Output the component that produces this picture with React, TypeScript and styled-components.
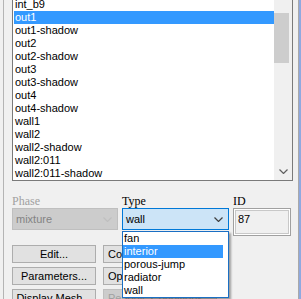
import styled, { createGlobalStyle } from 'styled-components';

const GlobalStyle = createGlobalStyle`
  html, body {
    margin: 0;
    padding: 0;
    background: #f0f0f0;
  }
  body {
    font-family: "Liberation Sans", Arial, sans-serif;
    font-size: 11px;
    color: #000;
  }
`;

const Window = styled.div`
  width: 301px;
  height: 299px;
  overflow: hidden;
  display: flex;
  background: #f0f0f0;
`;

const Group = styled.div`
  position: relative;
  margin-left: 3px;
  width: 296px;
  box-sizing: border-box;
  border-left: 1px solid #b4b4b4;
  border-right: 1px solid #a9a9a9;
  padding-left: 8px;
`;

const FrameEdge = styled.div`
  width: 2px;
  background: #8fa9e0;
`;

const ListBox = styled.div`
  margin-top: -3px;
  width: 281px;
  box-sizing: border-box;
  border: 1px solid #7a7a7a;
  background: #fff;
  display: flex;
`;

const Rows = styled.div`
  width: 261px;
  padding-left: 1px;
  box-sizing: border-box;
`;

const Row = styled.div<{ $selected?: boolean }>`
  height: 13px;
  line-height: 13px;
  padding-left: 1px;
  white-space: nowrap;
  background: ${(p) => (p.$selected ? '#3399ff' : 'transparent')};
  color: ${(p) => (p.$selected ? '#fff' : '#000')};
`;

const ScrollTrack = styled.div`
  width: 18px;
  background: #f0f0f0;
  display: flex;
  flex-direction: column;
  padding-top: 15px;
  box-sizing: border-box;
`;

const Thumb = styled.div`
  width: 15px;
  height: 50px;
  background: #cdcdcd;
`;

const ScrollSpacer = styled.div`
  flex: 1;
`;

const ScrollArrow = styled.div`
  height: 17px;
  display: flex;
  align-items: center;
  justify-content: center;
`;

const Form = styled.div`
  margin-top: 13px;
  display: grid;
  grid-template-columns: 106px 107px 58px;
  column-gap: 4px;
  align-items: start;
`;

const Label = styled.div<{ $disabled?: boolean }>`
  font-family: "Liberation Serif", "Times New Roman", serif;
  font-size: 12px;
  height: 14px;
  line-height: 14px;
  color: ${(p) => (p.$disabled ? '#a0a0a0' : '#000')};
`;

const Combo = styled.div<{ $disabled?: boolean; $open?: boolean }>`
  height: 22px;
  box-sizing: border-box;
  display: flex;
  align-items: center;
  justify-content: space-between;
  padding: 0 5px 0 3px;
  border: 1px solid ${(p) => (p.$disabled ? '#bfbfbf' : p.$open ? '#0078d7' : '#7a7a7a')};
  background: ${(p) => (p.$disabled ? '#cccccc' : p.$open ? '#cce4f7' : '#fff')};
  color: ${(p) => (p.$disabled ? '#838383' : '#000')};
`;

const IdBox = styled.div`
  height: 28px;
  box-sizing: border-box;
  border: 1px solid #a0a0a0;
  box-shadow: inset 0 0 0 1px #ffffff, inset 0 0 0 2px #c8c8c8;
  background: #f0f0f0;
  padding: 4px 0 0 4px;
  line-height: 13px;
`;

const Buttons = styled.div`
  margin-top: 9px;
  display: flex;
  flex-direction: column;
  gap: 4px;
`;

const ButtonRow = styled.div`
  display: flex;
  gap: 7px;
`;

const Button = styled.div<{ $disabled?: boolean; $wide?: boolean }>`
  height: 18px;
  box-sizing: border-box;
  border: 1px solid #adadad;
  background: #e1e1e1;
  line-height: 16px;
  text-align: center;
  white-space: nowrap;
  flex: none;
  width: ${(p) => (p.$wide ? '84px' : 'auto')};
  padding: ${(p) => (p.$wide ? '0' : '0 4px')};
  color: ${(p) => (p.$disabled ? '#a0a0a0' : '#000')};
  border-color: ${(p) => (p.$disabled ? '#bfbfbf' : '#adadad')};
  background: ${(p) => (p.$disabled ? '#cccccc' : '#e1e1e1')};
`;

const Popup = styled.div`
  position: absolute;
  left: 118px;
  top: 231px;
  width: 107px;
  box-sizing: border-box;
  border: 1px solid #1a6fc4;
  background: #fff;
  padding: 0 5px 0 0;
  box-shadow: 2px 2px 2px rgba(0, 0, 0, 0.35);
`;

const Option = styled.div<{ $active?: boolean }>`
  height: 13px;
  line-height: 13px;
  padding-left: 1px;
  background: ${(p) => (p.$active ? '#3399ff' : 'transparent')};
  color: ${(p) => (p.$active ? '#fff' : '#000')};
`;

const zones = [
  'int_b9',
  'out1',
  'out1-shadow',
  'out2',
  'out2-shadow',
  'out3',
  'out3-shadow',
  'out4',
  'out4-shadow',
  'wall1',
  'wall2',
  'wall2-shadow',
  'wall2:011',
  'wall2:011-shadow',
];

const types = ['fan', 'interior', 'porous-jump', 'radiator', 'wall'];

function Chevron({ color }: { color: string }) {
  return (
    <svg width="9" height="5" viewBox="0 0 9 5">
      <polyline points="0.5,0.5 4.5,4.5 8.5,0.5" fill="none" stroke={color} strokeWidth="1.2" />
    </svg>
  );
}

export default function App() {
  return (
    <Window>
      <GlobalStyle />
      <Group>
        <ListBox>
          <Rows>
            {zones.map((z) => (
              <Row key={z} $selected={z === 'out1'}>
                {z}
              </Row>
            ))}
          </Rows>
          <ScrollTrack>
            <Thumb />
            <ScrollSpacer />
            <ScrollArrow>
              <Chevron color="#606060" />
            </ScrollArrow>
          </ScrollTrack>
        </ListBox>

        <Form>
          <Label $disabled>Phase</Label>
          <Label>Type</Label>
          <Label>ID</Label>
          <Combo $disabled>
            <span>mixture</span>
            <Chevron color="#bfbfbf" />
          </Combo>
          <Combo $open>
            <span>wall</span>
            <Chevron color="#404040" />
          </Combo>
          <IdBox>87</IdBox>
        </Form>

        <Buttons>
          <ButtonRow>
            <Button $wide>Edit...</Button>
            <Button>Copy...</Button>
            <Button>Profiles...</Button>
          </ButtonRow>
          <ButtonRow>
            <Button $wide>Parameters...</Button>
            <Button>Operating Conditions...</Button>
          </ButtonRow>
          <ButtonRow>
            <Button $wide>Display Mesh...</Button>
            <Button $disabled>Periodic Conditions...</Button>
          </ButtonRow>
        </Buttons>

        <Popup>
          {types.map((t) => (
            <Option key={t} $active={t === 'interior'}>
              {t}
            </Option>
          ))}
        </Popup>
      </Group>
      <FrameEdge />
    </Window>
  );
}
